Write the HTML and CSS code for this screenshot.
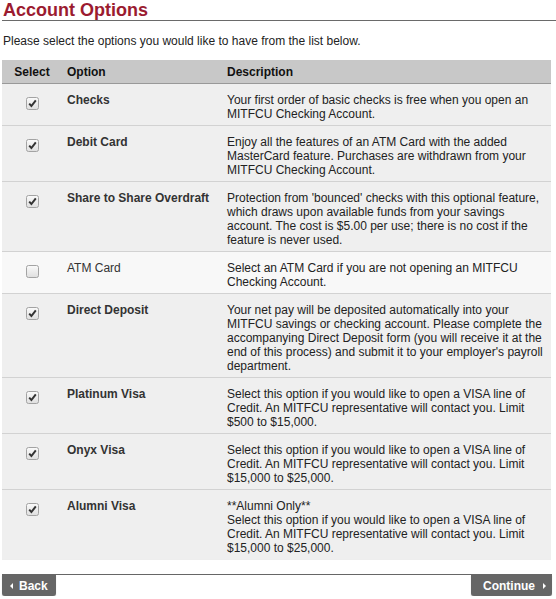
FILE: index.html
```html
<!DOCTYPE html>
<html>
<head>
<meta charset="utf-8">
<title>Account Options</title>
<link rel="stylesheet" href="styles.css">
</head>
<body>
<div class="page">
  <h1 class="title">Account Options</h1>
  <p class="intro">Please select the options you would like to have from the list below.</p>
  <table class="options">
    <colgroup><col class="c-sel"><col class="c-opt"><col class="c-desc"></colgroup>
    <thead>
      <tr><th class="sel">Select</th><th>Option</th><th class="desc">Description</th></tr>
    </thead>
    <tbody>
      <tr class="on">
        <td class="sel"><svg class="cb" viewBox="0 0 13 13"><defs><linearGradient id="g" x1="0" y1="0" x2="0" y2="1"><stop offset="0" stop-color="#fbfbfb"/><stop offset="1" stop-color="#dedede"/></linearGradient></defs><rect x="0.5" y="0.5" width="12" height="12" rx="2" fill="url(#g)" stroke="#a3a3a3"/><path d="M3.2 6.6 L5.4 9 L9.8 3.4" fill="none" stroke="#333" stroke-width="2"/></svg></td>
        <td class="opt">Checks</td>
        <td class="desc">Your first order of basic checks is free when you open an MITFCU Checking Account.</td>
      </tr>
      <tr class="on">
        <td class="sel"><svg class="cb" viewBox="0 0 13 13"><rect x="0.5" y="0.5" width="12" height="12" rx="2" fill="url(#g)" stroke="#a3a3a3"/><path d="M3.2 6.6 L5.4 9 L9.8 3.4" fill="none" stroke="#333" stroke-width="2"/></svg></td>
        <td class="opt">Debit Card</td>
        <td class="desc">Enjoy all the features of an ATM Card with the added MasterCard feature. Purchases are withdrawn from your MITFCU Checking Account.</td>
      </tr>
      <tr class="on">
        <td class="sel"><svg class="cb" viewBox="0 0 13 13"><rect x="0.5" y="0.5" width="12" height="12" rx="2" fill="url(#g)" stroke="#a3a3a3"/><path d="M3.2 6.6 L5.4 9 L9.8 3.4" fill="none" stroke="#333" stroke-width="2"/></svg></td>
        <td class="opt">Share to Share Overdraft</td>
        <td class="desc">Protection from 'bounced' checks with this optional feature, which draws upon available funds from your savings account. The cost is $5.00 per use; there is no cost if the feature is never used.</td>
      </tr>
      <tr class="off">
        <td class="sel"><svg class="cb" viewBox="0 0 13 13"><rect x="0.5" y="0.5" width="12" height="12" rx="2" fill="url(#g)" stroke="#a3a3a3"/></svg></td>
        <td class="opt">ATM Card</td>
        <td class="desc">Select an ATM Card if you are not opening an MITFCU Checking Account.</td>
      </tr>
      <tr class="on">
        <td class="sel"><svg class="cb" viewBox="0 0 13 13"><rect x="0.5" y="0.5" width="12" height="12" rx="2" fill="url(#g)" stroke="#a3a3a3"/><path d="M3.2 6.6 L5.4 9 L9.8 3.4" fill="none" stroke="#333" stroke-width="2"/></svg></td>
        <td class="opt">Direct Deposit</td>
        <td class="desc">Your net pay will be deposited automatically into your MITFCU savings or checking account. Please complete the accompanying Direct Deposit form (you will receive it at the end of this process) and submit it to your employer's payroll department.</td>
      </tr>
      <tr class="on">
        <td class="sel"><svg class="cb" viewBox="0 0 13 13"><rect x="0.5" y="0.5" width="12" height="12" rx="2" fill="url(#g)" stroke="#a3a3a3"/><path d="M3.2 6.6 L5.4 9 L9.8 3.4" fill="none" stroke="#333" stroke-width="2"/></svg></td>
        <td class="opt">Platinum Visa</td>
        <td class="desc">Select this option if you would like to open a VISA line of Credit. An MITFCU representative will contact you. Limit $500 to $15,000.</td>
      </tr>
      <tr class="on">
        <td class="sel"><svg class="cb" viewBox="0 0 13 13"><rect x="0.5" y="0.5" width="12" height="12" rx="2" fill="url(#g)" stroke="#a3a3a3"/><path d="M3.2 6.6 L5.4 9 L9.8 3.4" fill="none" stroke="#333" stroke-width="2"/></svg></td>
        <td class="opt">Onyx Visa</td>
        <td class="desc">Select this option if you would like to open a VISA line of Credit. An MITFCU representative will contact you. Limit $15,000 to $25,000.</td>
      </tr>
      <tr class="on last">
        <td class="sel"><svg class="cb" viewBox="0 0 13 13"><rect x="0.5" y="0.5" width="12" height="12" rx="2" fill="url(#g)" stroke="#a3a3a3"/><path d="M3.2 6.6 L5.4 9 L9.8 3.4" fill="none" stroke="#333" stroke-width="2"/></svg></td>
        <td class="opt">Alumni Visa</td>
        <td class="desc">**Alumni Only**<br>Select this option if you would like to open a VISA line of Credit. An MITFCU representative will contact you. Limit $15,000 to $25,000.</td>
      </tr>
    </tbody>
  </table>
  <div class="nav">
    <a class="btn back" href="#"><span class="tri-l"></span>Back</a>
    <a class="btn next" href="#">Continue<span class="tri-r"></span></a>
  </div>
</div>
</body>
</html>
```
FILE: styles.css
```css
html, body {
  margin: 0;
  padding: 0;
  background: #fff;
}
body {
  font-family: "Liberation Sans", Arial, sans-serif;
  font-size: 12px;
  line-height: 14px;
  color: #222;
}
.page {
  padding-left: 2px;
}
.title {
  margin: 0;
  font-size: 18px;
  line-height: 20px;
  font-weight: bold;
  color: #9b1b30;
  border-bottom: 1px solid #6a6a6a;
  padding-left: 1px;
}
.intro {
  margin: 13px 0 12px 1px;
  color: #222;
}
.options {
  width: 549px;
  border-collapse: collapse;
  table-layout: fixed;
}
.c-sel { width: 60px; }
.c-opt { width: 158px; }
.c-desc { width: 331px; }
.options th {
  background: #c8c8c8;
  text-align: left;
  font-weight: bold;
  color: #111;
  padding: 5px 5px 4px 5px;
  border-bottom: 1px solid #999;
}
.options th.sel { text-align: center; padding-left: 0; padding-right: 0; }
.options th.desc { padding-left: 7px; }
.options td {
  vertical-align: top;
  padding: 9px 3px 4px 5px;
  border-bottom: 1px solid #d2d2d2;
  color: #222;
}
.options td.sel {
  padding-left: 0;
  padding-right: 0;
}
.options td.desc {
  padding-left: 7px;
  padding-right: 3px;
}
.options tr.last td { border-bottom: 1px solid #eeeeee; }
.options tr.on td { background: #efefef; }
.options tr.on td.opt { font-weight: bold; color: #333; }
.options tr.off td { background: #f8f8f8; }
.options tr.off td.opt { color: #333; }
.cb {
  display: block;
  width: 13px;
  height: 13px;
  margin: 4px auto 0;
}
.nav {
  width: 550px;
  margin-top: 14px;
  border-top: 1px solid #666;
  display: flex;
  justify-content: space-between;
  align-items: flex-start;
}
.btn {
  display: flex;
  align-items: center;
  height: 21px;
  background: #666;
  color: #fff;
  font-weight: bold;
  text-decoration: none;
  border-radius: 0 0 3px 3px;
  box-shadow: 0 1px 1px rgba(0,0,0,0.25);
}
.back {
  padding: 0 8px 0 8px;
  width: 38px;
}
.next {
  padding: 0 6px 0 12px;
  width: 63px;
}
.tri-l {
  width: 0;
  height: 0;
  border-top: 3px solid transparent;
  border-bottom: 3px solid transparent;
  border-right: 3px solid #fff;
  margin-right: 6px;
}
.tri-r {
  width: 0;
  height: 0;
  border-top: 3px solid transparent;
  border-bottom: 3px solid transparent;
  border-left: 3px solid #fff;
  margin-left: auto;
}
```
